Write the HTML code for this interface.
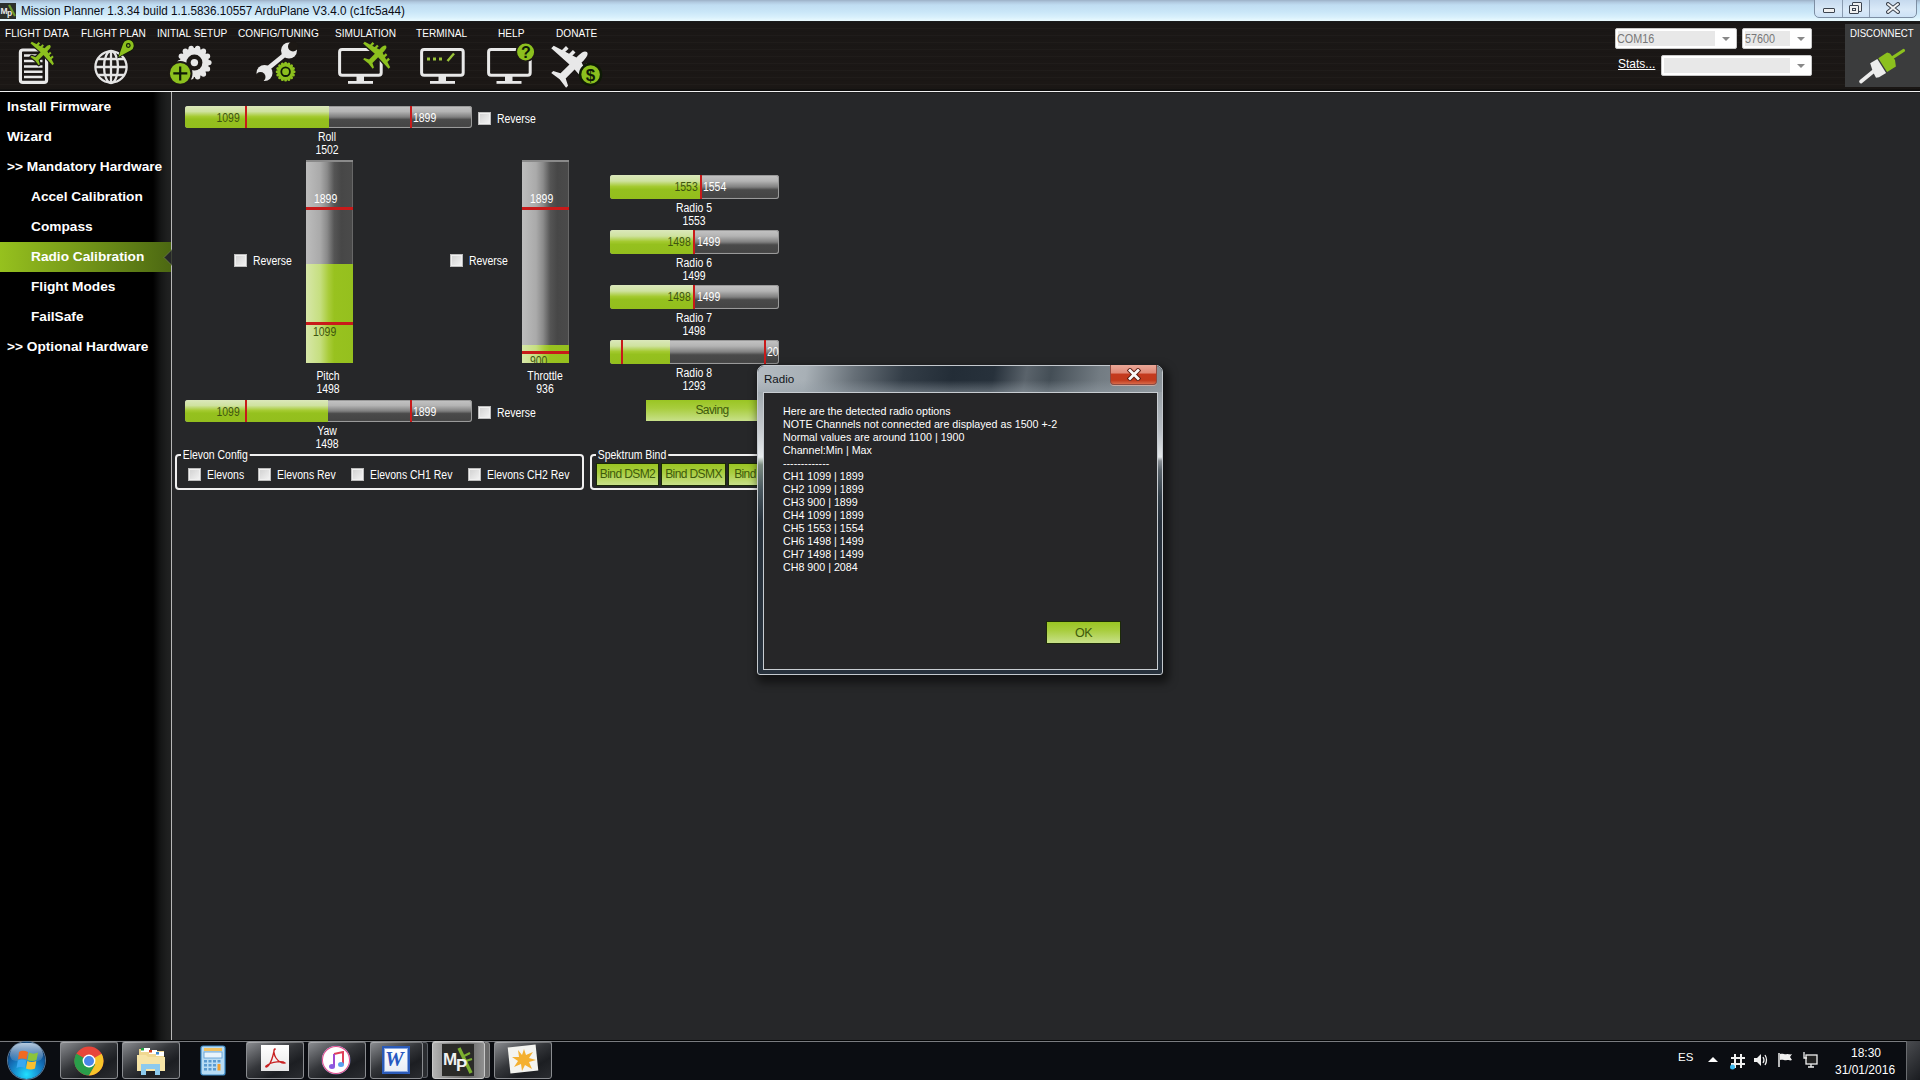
<!DOCTYPE html>
<html><head><meta charset="utf-8">
<style>
*{margin:0;padding:0;box-sizing:border-box}
html,body{width:1920px;height:1080px;overflow:hidden;background:#262729;font-family:"Liberation Sans",sans-serif}
.a{position:absolute}
#title{left:0;top:0;width:1920px;height:21px;background:linear-gradient(#9cb0c6 0,#b0c8de 2px,#c0ddf2 5px,#cae7f8 12px,#d8f0fc 17px,#e6f8fe 20px,#eaf9fe 21px)}
#titletext{left:21px;top:4px;font-size:12.3px;transform:scaleX(.95);transform-origin:0 50%;color:#0c0c14;white-space:nowrap}
#menubar{left:0;top:21px;width:1920px;height:70px;background:linear-gradient(rgba(0,0,0,0) 68px,#0c0c0c 69px),repeating-linear-gradient(rgba(255,240,220,0.025) 0 1px,rgba(0,0,0,0) 1px 3px,rgba(0,0,0,0.05) 3px 4px,rgba(0,0,0,0) 4px 7px),linear-gradient(#121416 0,#1a1716 2px,#1b1715 66px,#191614 68px)}
#hline{left:0;top:91px;width:1920px;height:2px;background:linear-gradient(#f0f0f0 50%,#1c1d1e 50%)}
#sidebar{left:0;top:92px;width:171px;height:948px;background:linear-gradient(90deg,#000 0,#000 153px,#151616 161px,#1e1f1f 167px,#212222 171px)}
#vline{left:171px;top:92px;width:1px;height:948px;background:#b8b8b8}
#taskbar{left:0;top:1040px;width:1920px;height:40px;background:#0b0d12;border-top:1px solid #040506}
.side{position:absolute;left:7px;font-size:13.7px;font-weight:bold;color:#fff;white-space:nowrap}
.side.sub{left:31px}
.mlabel{position:absolute;top:28px;font-size:10.1px;color:#fff;white-space:nowrap}
.combo{position:absolute;height:21px;background:#fff;border:1px solid #c8c8c8;border-radius:2px}
.combo::before{content:"";position:absolute;left:2px;top:2px;right:21px;bottom:2px;background:#e8e8e8}
.combo::after{content:"";position:absolute;right:6px;top:8px;border-left:4px solid transparent;border-right:4px solid transparent;border-top:4px solid #888}
.combo span{position:absolute;top:3px;font-size:12px;color:#777;white-space:nowrap;transform:scaleX(.9);transform-origin:0 50%}

.hbar{position:absolute;height:23px;border-radius:3px;overflow:hidden;background:linear-gradient(#c4c4c4 0,#b4b4b4 25%,#808080 50%,#4a4a4a 62%,#454545 90%,#4e4e4e 100%);box-shadow:inset 0 0 0 1px #9a9a9a}
.hbar .g{position:absolute;left:0;top:0;bottom:0;background:linear-gradient(#dbe8bb 0,#cfe2a0 25%,#a4ca30 48%,#95c11e 60%,#93be1d 100%)}
.vbar{position:absolute;width:47px;height:203px;overflow:hidden;background:linear-gradient(90deg,#bdbdbd 0,#aaa 30%,#8a8a8a 45%,#555 60%,#474747 75%,#4a4a4a 97%,#777 100%);border-top:2px solid #8a8a8a}
.vbar .g{position:absolute;left:0;right:0;bottom:0;background:linear-gradient(90deg,#d7e7a8 0,#c6df80 30%,#a9cc3a 48%,#98c21f 60%,#95c01e 100%)}
.red{position:absolute;background:#c81a1a}
.hbar .red{top:0;bottom:0;width:2px}
.vbar .red{left:0;right:0;height:3px}
.num{position:absolute;margin-top:1px;font-size:12px;white-space:nowrap;line-height:13px;transform:scaleX(.87)}
.nd{color:#3e5510;transform-origin:100% 50%}
.nw{color:#fff;transform-origin:0 50%}
.lbl{position:absolute;margin-top:1px;width:80px;text-align:center;font-size:12px;line-height:13px;color:#fff;white-space:nowrap;transform:scaleX(.87)}
.cb{position:absolute;width:13px;height:13px;background:linear-gradient(135deg,#d0d0d0,#f4f4f4);border:1px solid #bcbcbc;box-shadow:inset 0 0 0 1px #f0f0f0}
.ct{position:absolute;margin-top:1px;font-size:12px;color:#fff;white-space:nowrap;line-height:13px;transform:scaleX(.87);transform-origin:0 50%}
.grp{position:absolute;border:2px solid #f0f0f0;border-radius:4px}
.leg{position:absolute;margin-top:1px;background:#262729;padding:0 2px;font-size:12px;color:#fff;white-space:nowrap;line-height:13px;transform:scaleX(.87);transform-origin:0 50%}
.gbtn{position:absolute;height:23px;background:linear-gradient(#9ac523 0,#a8cd3e 40%,#c8e08a 100%);border:1px solid #1a2a05;font-size:12px;color:#3e5a0c;text-align:center;line-height:21px;white-space:nowrap;letter-spacing:-0.6px}

.tb{position:absolute;top:1041px;height:38px;border:1px solid #8a8c90;border-radius:3px;background:linear-gradient(150deg,#8c8e92 0,#606266 22%,#34363a 45%,#1c1e22 70%,#2a2c30 100%);box-shadow:inset 0 1px 0 rgba(255,255,255,0.3)}
.tbe{position:absolute;top:1042px;height:36px;width:5px;border:1px solid #5a5e64;border-left:none;border-radius:0 3px 3px 0;background:#2a2c30}
.tray{position:absolute;color:#fff;font-size:12px;white-space:nowrap}
</style></head><body>
<div id="title" class="a"></div>
<div id="titletext" class="a">Mission Planner 1.3.34 build 1.1.5836.10557 ArduPlane V3.4.0 (c1fc5a44)</div>
<div id="menubar" class="a"></div>

<div class="mlabel" style="left:5px">FLIGHT DATA</div>
<div class="mlabel" style="left:81px">FLIGHT PLAN</div>
<div class="mlabel" style="left:157px">INITIAL SETUP</div>
<div class="mlabel" style="left:238px">CONFIG/TUNING</div>
<div class="mlabel" style="left:335px">SIMULATION</div>
<div class="mlabel" style="left:416px">TERMINAL</div>
<div class="mlabel" style="left:498px">HELP</div>
<div class="mlabel" style="left:556px">DONATE</div>
<svg class="a" style="left:0;top:21px" width="640" height="70" viewBox="0 21 640 70">
 <defs><clipPath id="dclip"><polygon points="540,20 640,20 640,34 582,92 540,92"/></clipPath></defs>
 <!-- flight data doc -->
 <rect x="20.4" y="50" width="26.2" height="32.4" rx="2.5" fill="none" stroke="#e8e8e8" stroke-width="3.2"/>
 <g stroke="#e8e8e8" stroke-width="2.5"><path d="M24,55.6h18.5M24,60.9h18.5M24,66.5h18.5M24,71.8h18.5M24,77h18.5"/></g>
 <path d="M0,-12 C1.8,-12 2.6,-9.5 2.6,-6 L2.6,-4 L20,1.5 L20,4 L2.6,3 L2.6,12 L7.5,14.5 L7.5,16.5 L0,15.5 L-7.5,16.5 L-7.5,14.5 L-2.6,12 L-2.6,3 L-20,4 L-20,1.5 L-2.6,-4 L-2.6,-6 C-2.6,-9.5 -1.8,-12 0,-12Z M5.5,-6 h2.6 v4 h-2.6Z M11,-4.5 h2.6 v4 h-2.6Z M-8.1,-6 h2.6 v4 h-2.6Z M-13.6,-4.5 h2.6 v4 h-2.6Z" transform="translate(43.7,52) rotate(45) scale(0.78)" fill="#8cc01e" stroke="#1c1917" stroke-width="3" paint-order="stroke" stroke-linejoin="round"/>
 <!-- globe -->
 <g fill="none" stroke="#e4e4e4" stroke-width="2.3">
  <circle cx="111" cy="67" r="15.6"/>
  <ellipse cx="111" cy="67" rx="7" ry="16"/>
  <path d="M111,51v32M95,67h32M97.5,59h27M97.5,75h27"/>
 </g>
 <path d="M118.5,57 L123.1,43.7 A5.5,5.5 0 1 1 130.9,50.35 Z" fill="#8cc01e" stroke="#0e1a06" stroke-width="1.4" paint-order="stroke"/>
 <circle cx="128.3" cy="45.5" r="1.8" fill="none" stroke="#0e1a06" stroke-width="1.2"/>
 <!-- initial setup gear -->
 <circle cx="194.4" cy="62.6" r="14.5" fill="#e8e8e8"/><circle cx="208.90" cy="62.60" r="2.7" fill="#e8e8e8"/><circle cx="207.46" cy="68.89" r="2.7" fill="#e8e8e8"/><circle cx="203.44" cy="73.94" r="2.7" fill="#e8e8e8"/><circle cx="197.63" cy="76.74" r="2.7" fill="#e8e8e8"/><circle cx="191.17" cy="76.74" r="2.7" fill="#e8e8e8"/><circle cx="185.36" cy="73.94" r="2.7" fill="#e8e8e8"/><circle cx="181.34" cy="68.89" r="2.7" fill="#e8e8e8"/><circle cx="179.90" cy="62.60" r="2.7" fill="#e8e8e8"/><circle cx="181.34" cy="56.31" r="2.7" fill="#e8e8e8"/><circle cx="185.36" cy="51.26" r="2.7" fill="#e8e8e8"/><circle cx="191.17" cy="48.46" r="2.7" fill="#e8e8e8"/><circle cx="197.63" cy="48.46" r="2.7" fill="#e8e8e8"/><circle cx="203.44" cy="51.26" r="2.7" fill="#e8e8e8"/><circle cx="207.46" cy="56.31" r="2.7" fill="#e8e8e8"/>
 <circle cx="194.4" cy="62.6" r="8" fill="#1c1815"/>
 <circle cx="194.4" cy="62.6" r="3.7" fill="#e8e8e8"/>
 <circle cx="180.2" cy="73.4" r="11.3" fill="#8cc01e" stroke="#1c1815" stroke-width="2"/>
 <path d="M180.2,66.5v14M173.3,73.4h14" stroke="#0e1a06" stroke-width="2.2"/>
 <!-- config tuning wrench -->
 <path d="M266,70 L288,52" stroke="#e8e8e8" stroke-width="4.6" stroke-linecap="round"/>
 <circle cx="289" cy="50.5" r="8" fill="#e8e8e8"/><circle cx="293" cy="46.5" r="5" fill="#1c1815"/>
 <circle cx="264.5" cy="73" r="8" fill="#e8e8e8"/><circle cx="260.5" cy="77" r="5" fill="#1c1815"/>
 <circle cx="285.6" cy="71.7" r="9.2" fill="#1c1815"/><circle cx="294.80" cy="71.70" r="1.6" fill="#1c1815"/><circle cx="294.10" cy="75.22" r="1.6" fill="#1c1815"/><circle cx="292.11" cy="78.21" r="1.6" fill="#1c1815"/><circle cx="289.12" cy="80.20" r="1.6" fill="#1c1815"/><circle cx="285.60" cy="80.90" r="1.6" fill="#1c1815"/><circle cx="282.08" cy="80.20" r="1.6" fill="#1c1815"/><circle cx="279.09" cy="78.21" r="1.6" fill="#1c1815"/><circle cx="277.10" cy="75.22" r="1.6" fill="#1c1815"/><circle cx="276.40" cy="71.70" r="1.6" fill="#1c1815"/><circle cx="277.10" cy="68.18" r="1.6" fill="#1c1815"/><circle cx="279.09" cy="65.19" r="1.6" fill="#1c1815"/><circle cx="282.08" cy="63.20" r="1.6" fill="#1c1815"/><circle cx="285.60" cy="62.50" r="1.6" fill="#1c1815"/><circle cx="289.12" cy="63.20" r="1.6" fill="#1c1815"/><circle cx="292.11" cy="65.19" r="1.6" fill="#1c1815"/><circle cx="294.10" cy="68.18" r="1.6" fill="#1c1815"/>
 <circle cx="285.6" cy="71.7" r="8.4" fill="#8cc01e"/><circle cx="294.00" cy="71.70" r="1.5" fill="#8cc01e"/><circle cx="293.36" cy="74.91" r="1.5" fill="#8cc01e"/><circle cx="291.54" cy="77.64" r="1.5" fill="#8cc01e"/><circle cx="288.81" cy="79.46" r="1.5" fill="#8cc01e"/><circle cx="285.60" cy="80.10" r="1.5" fill="#8cc01e"/><circle cx="282.39" cy="79.46" r="1.5" fill="#8cc01e"/><circle cx="279.66" cy="77.64" r="1.5" fill="#8cc01e"/><circle cx="277.84" cy="74.91" r="1.5" fill="#8cc01e"/><circle cx="277.20" cy="71.70" r="1.5" fill="#8cc01e"/><circle cx="277.84" cy="68.49" r="1.5" fill="#8cc01e"/><circle cx="279.66" cy="65.76" r="1.5" fill="#8cc01e"/><circle cx="282.39" cy="63.94" r="1.5" fill="#8cc01e"/><circle cx="285.60" cy="63.30" r="1.5" fill="#8cc01e"/><circle cx="288.81" cy="63.94" r="1.5" fill="#8cc01e"/><circle cx="291.54" cy="65.76" r="1.5" fill="#8cc01e"/><circle cx="293.36" cy="68.49" r="1.5" fill="#8cc01e"/>
 <circle cx="285.6" cy="71.7" r="4.3" fill="none" stroke="#0e1a06" stroke-width="1.8"/>
 <!-- monitors -->
 <g fill="none" stroke="#e8e8e8">
  <rect x="339.6" y="49.5" width="41.6" height="25.8" rx="2.5" stroke-width="3"/>
  <rect x="421.6" y="49.5" width="41.6" height="25.8" rx="2.5" stroke-width="3"/>
  <rect x="488.6" y="49.5" width="41.6" height="25.8" rx="2.5" stroke-width="3"/>
 </g>
 <g fill="#e8e8e8">
  <rect x="356.5" y="76" width="7.5" height="5.5"/><rect x="348" y="81" width="25" height="2.8"/>
  <rect x="438.5" y="76" width="7.5" height="5.5"/><rect x="430" y="81" width="25" height="2.8"/>
  <rect x="505" y="76" width="7.5" height="5.5"/><rect x="496.5" y="81" width="25" height="2.8"/>
 </g>
 <path d="M0,-12 C1.8,-12 2.6,-9.5 2.6,-6 L2.6,-4 L20,1.5 L20,4 L2.6,3 L2.6,12 L7.5,14.5 L7.5,16.5 L0,15.5 L-7.5,16.5 L-7.5,14.5 L-2.6,12 L-2.6,3 L-20,4 L-20,1.5 L-2.6,-4 L-2.6,-6 C-2.6,-9.5 -1.8,-12 0,-12Z M5.5,-6 h2.6 v4 h-2.6Z M11,-4.5 h2.6 v4 h-2.6Z M-8.1,-6 h2.6 v4 h-2.6Z M-13.6,-4.5 h2.6 v4 h-2.6Z" transform="translate(378.4,53.6) rotate(45) scale(0.9)" fill="#8cc01e" stroke="#1c1917" stroke-width="3" paint-order="stroke" stroke-linejoin="round"/>
 <!-- terminal dots -->
 <g fill="#9bc43a"><rect x="427" y="57.5" width="3" height="3"/><rect x="433" y="57.5" width="3" height="3"/><rect x="439" y="57.5" width="3" height="3"/></g>
 <path d="M447.5,61 L454,53.5" stroke="#9bc43a" stroke-width="2.4"/>
 <!-- help -->
 <circle cx="525.6" cy="52" r="9.3" fill="#8cc01e" stroke="#1c1815" stroke-width="1.6"/>
 <text x="525.8" y="58" font-family="Liberation Sans" font-weight="bold" font-size="16" text-anchor="middle" fill="#0e1a06">?</text>
 <!-- donate plane -->
 <g clip-path="url(#dclip)"><path d="M0,-12 C1.8,-12 2.6,-9.5 2.6,-6 L2.6,-4 L20,1.5 L20,4 L2.6,3 L2.6,12 L7.5,14.5 L7.5,16.5 L0,15.5 L-7.5,16.5 L-7.5,14.5 L-2.6,12 L-2.6,3 L-20,4 L-20,1.5 L-2.6,-4 L-2.6,-6 C-2.6,-9.5 -1.8,-12 0,-12Z M5.5,-6 h2.6 v4 h-2.6Z M11,-4.5 h2.6 v4 h-2.6Z M-8.1,-6 h2.6 v4 h-2.6Z M-13.6,-4.5 h2.6 v4 h-2.6Z" transform="translate(575,64) rotate(45) scale(1.4)" fill="#e8e8e8"/></g>
 <circle cx="590.6" cy="74.5" r="10.5" fill="#8cc01e" stroke="#0e1a06" stroke-width="2.4"/>
 <text x="590.6" y="80.8" font-family="Liberation Sans" font-weight="bold" font-size="17" text-anchor="middle" fill="#0e1a06">$</text>
</svg>

<!-- title icon -->
<div class="a" style="left:0;top:3px;width:16px;height:16px;background:#2c302c"></div>
<svg class="a" style="left:0;top:3px" width="16" height="16" viewBox="0 0 16 16">
 <path d="M9,2 L15,13" stroke="#6a9a2a" stroke-width="2.2"/>
 <text x="0.5" y="10.5" font-family="Liberation Sans" font-weight="bold" font-size="8.5" fill="#e8e8e8" letter-spacing="-0.8">M</text>
 <text x="7" y="13" font-family="Liberation Sans" font-weight="bold" font-size="8.5" fill="#e8e8e8">p</text>
</svg>
<!-- window controls -->
<div class="a" style="left:1814px;top:-3px;width:103px;height:21px;border:1px solid #7d8ea3;border-radius:0 0 5px 5px;background:linear-gradient(#c2d6ec,#d9e9f8 60%,#cde2f6)"></div>
<div class="a" style="left:1842px;top:0;width:1px;height:17px;background:#8a9bb0"></div>
<div class="a" style="left:1869px;top:0;width:1px;height:17px;background:#8a9bb0"></div>
<div class="a" style="left:1823px;top:8px;width:12px;height:5px;border:1px solid #3c4450;border-radius:1px;background:#f0f0f0"></div>
<div class="a" style="left:1852px;top:2px;width:10px;height:10px;border:1px solid #3c4450;border-radius:1px;background:#f0f0f0"></div>
<div class="a" style="left:1849px;top:5px;width:10px;height:9px;border:1px solid #3c4450;border-radius:1px;background:#f0f0f0"></div>
<div class="a" style="left:1852px;top:8px;width:4px;height:3px;border:1px solid #3c4450"></div>
<svg class="a" style="left:1886px;top:2px" width="14" height="12"><path d="M2,2 L12,10 M12,2 L2,10" stroke="#3c4450" stroke-width="4" stroke-linecap="round"/><path d="M2,2 L12,10 M12,2 L2,10" stroke="#f4f4f4" stroke-width="2" stroke-linecap="round"/></svg>
<!-- combos -->
<div class="combo" style="left:1615px;top:28px;width:122px"><span style="left:1px">COM16</span></div>
<div class="combo" style="left:1742px;top:28px;width:70px"><span style="left:2px">57600</span></div>
<div class="combo" style="left:1661px;top:55px;width:151px"></div>
<div class="a" style="left:1618px;top:57px;font-size:12px;color:#fff;text-decoration:underline;white-space:nowrap">Stats...</div>
<!-- disconnect -->
<div class="a" style="left:1845px;top:24px;width:75px;height:63px;background:#3b3c3d"></div>
<div class="a" style="left:1850px;top:27px;font-size:11px;color:#fff;white-space:nowrap;transform:scaleX(.875);transform-origin:0 50%">DISCONNECT</div>
<svg class="a" style="left:1845px;top:23px" width="75" height="64" viewBox="1845 23 75 64">
 <path d="M1892,58 L1903.5,50.5" stroke="#8cc01e" stroke-width="3.2" stroke-linecap="round"/>
 <path d="M1878.3,58.2 L1884,54.6 L1887.1,52.6 L1890,53.5 L1895,60 L1895.9,66.5 L1887.1,72.1Z" fill="#8cc01e"/>
 <path d="M1874.5,70.5 L1861,81.5" stroke="#ececec" stroke-width="3.6" stroke-linecap="round"/>
 <path d="M1877.3,59 L1886.1,73 L1879,77.2 L1876,77.8 L1873,72 L1870.2,63.3Z" fill="#ececec"/>
</svg>
<div id="hline" class="a"></div>
<div id="sidebar" class="a"></div>
<div id="vline" class="a"></div>
<div class="a" style="left:0;top:242px;width:171px;height:30px;background:linear-gradient(90deg,#96c11e,#7a9e1a 40%,#4c6812 100%)"></div>
<svg class="a" style="left:163px;top:249px" width="9" height="17"><path d="M9,0.5 L1,8.5 L9,16.5Z" fill="#262729" stroke="#7a8a5a" stroke-width="0.6"/></svg>
<div class="side" style="top:99px">Install Firmware</div>
<div class="side" style="top:129px">Wizard</div>
<div class="side" style="top:159px">&gt;&gt; Mandatory Hardware</div>
<div class="side sub" style="top:189px">Accel Calibration</div>
<div class="side sub" style="top:219px">Compass</div>
<div class="side sub" style="top:249px">Radio Calibration</div>
<div class="side sub" style="top:279px">Flight Modes</div>
<div class="side sub" style="top:309px">FailSafe</div>
<div class="side" style="top:339px">&gt;&gt; Optional Hardware</div>

<!-- ROLL -->
<div class="hbar" style="left:185px;top:106px;width:287px;height:22px"><div class="g" style="width:144px"></div><div class="red" style="left:60px"></div><div class="red" style="left:225px"></div>
 <div class="num nd" style="right:232px;top:5px">1099</div><div class="num nw" style="left:228px;top:5px">1899</div></div>
<div class="cb" style="left:478px;top:112px"></div><div class="ct" style="left:497px;top:112px">Reverse</div>
<div class="lbl" style="left:287px;top:130px">Roll<br>1502</div>
<!-- PITCH -->
<div class="vbar" style="left:306px;top:160px"><div class="g" style="height:99px"></div><div class="red" style="top:45px"></div><div class="red" style="top:160px"></div>
 <div class="num nw" style="left:8px;top:30px">1899</div><div class="num nd" style="left:7px;top:163px;transform-origin:0 50%">1099</div></div>
<div class="cb" style="left:234px;top:254px"></div><div class="ct" style="left:253px;top:254px">Reverse</div>
<div class="lbl" style="left:288px;top:369px">Pitch<br>1498</div>
<!-- THROTTLE -->
<div class="vbar" style="left:522px;top:160px"><div class="g" style="height:18px"></div><div class="red" style="top:45px"></div><div class="red" style="top:189px"></div>
 <div class="num nw" style="left:8px;top:30px">1899</div><div class="num nd" style="left:8px;top:192px;transform-origin:0 50%">900</div></div>
<div class="cb" style="left:450px;top:254px"></div><div class="ct" style="left:469px;top:254px">Reverse</div>
<div class="lbl" style="left:505px;top:369px">Throttle<br>936</div>
<!-- YAW -->
<div class="hbar" style="left:185px;top:400px;width:287px;height:22px"><div class="g" style="width:143px"></div><div class="red" style="left:60px"></div><div class="red" style="left:225px"></div>
 <div class="num nd" style="right:232px;top:5px">1099</div><div class="num nw" style="left:228px;top:5px">1899</div></div>
<div class="cb" style="left:478px;top:406px"></div><div class="ct" style="left:497px;top:406px">Reverse</div>
<div class="lbl" style="left:287px;top:424px">Yaw<br>1498</div>
<!-- RADIO 5-8 -->
<div class="hbar" style="left:610px;top:175px;width:169px;height:24px"><div class="g" style="width:90px"></div><div class="red" style="left:90px"></div>
 <div class="num nd" style="right:81px;top:5px">1553</div><div class="num nw" style="left:93px;top:5px">1554</div></div>
<div class="lbl" style="left:654px;top:201px">Radio 5<br>1553</div>
<div class="hbar" style="left:610px;top:230px;width:169px;height:24px"><div class="g" style="width:83px"></div><div class="red" style="left:83px"></div>
 <div class="num nd" style="right:88px;top:5px">1498</div><div class="num nw" style="left:87px;top:5px">1499</div></div>
<div class="lbl" style="left:654px;top:256px">Radio 6<br>1499</div>
<div class="hbar" style="left:610px;top:285px;width:169px;height:24px"><div class="g" style="width:83px"></div><div class="red" style="left:83px"></div>
 <div class="num nd" style="right:88px;top:5px">1498</div><div class="num nw" style="left:87px;top:5px">1499</div></div>
<div class="lbl" style="left:654px;top:311px">Radio 7<br>1498</div>
<div class="hbar" style="left:610px;top:340px;width:169px;height:24px"><div class="g" style="width:60px"></div><div class="red" style="left:11px"></div><div class="red" style="left:154px"></div>
 <div class="num nw" style="left:157px;top:5px">20</div></div>
<div class="lbl" style="left:654px;top:366px">Radio 8<br>1293</div>
<div class="gbtn" style="left:645px;top:399px;width:134px;border-color:#262628">Saving</div>
<!-- ELEVON -->
<div class="grp" style="left:175px;top:454px;width:409px;height:36px"></div>
<div class="leg" style="left:181px;top:448px">Elevon Config</div>
<div class="cb" style="left:188px;top:468px"></div><div class="ct" style="left:207px;top:468px">Elevons</div>
<div class="cb" style="left:258px;top:468px"></div><div class="ct" style="left:277px;top:468px">Elevons Rev</div>
<div class="cb" style="left:351px;top:468px"></div><div class="ct" style="left:370px;top:468px">Elevons CH1 Rev</div>
<div class="cb" style="left:468px;top:468px"></div><div class="ct" style="left:487px;top:468px">Elevons CH2 Rev</div>
<!-- SPEKTRUM -->
<div class="grp" style="left:590px;top:454px;width:220px;height:36px"></div>
<div class="leg" style="left:596px;top:448px">Spektrum Bind</div>
<div class="gbtn" style="left:596px;top:463px;width:63px">Bind DSM2</div>
<div class="gbtn" style="left:661px;top:463px;width:65px">Bind DSMX</div>
<div class="gbtn" style="left:728px;top:463px;width:75px">Bind DSMX8</div>

<!-- DIALOG -->
<div class="a" style="left:757px;top:365px;width:406px;height:310px;border:1px solid #c4c9ce;border-radius:7px 7px 3px 3px;background:#27313c;box-shadow:3px 5px 9px 3px rgba(0,0,0,0.5)"></div>
<div class="a" style="left:758px;top:366px;width:404px;height:26px;border-radius:6px 6px 0 0;background:linear-gradient(rgba(150,160,168,0) 55%,rgba(150,160,168,0.5) 100%),linear-gradient(100deg,#b4bbc1 0,#a8b0b6 12%,#666f77 24%,#333d47 36%,#232d37 48%,#27313b 58%,#5a636b 66%,#444e56 72%,#737c83 84%,#8a9298 100%)"></div>
<div class="a" style="left:758px;top:392px;width:5px;height:130px;background:linear-gradient(#a0a8ae 0,#c8ccd0 30%,#e8ecee 50%,#b0beb4 53%,#7a8a80 56%,#4a5860 75%,#27313c 100%)"></div>
<div class="a" style="left:1157px;top:392px;width:5px;height:130px;background:linear-gradient(#98a0a6 0,#b8bec4 30%,#e4e8ea 50%,#8a9096 53%,#5a646c 60%,#34404a 80%,#27313c 100%)"></div>
<div class="a" style="left:763px;top:392px;width:395px;height:278px;border:1px solid #c8cdd2;background:#262628"></div>
<div class="a" style="left:764px;top:372px;font-size:11.6px;color:#101418;white-space:nowrap">Radio</div>
<div class="a" style="left:1110px;top:365px;width:47px;height:20px;border:1px solid #8e4a40;border-top:none;border-radius:0 0 4px 4px;background:linear-gradient(#eaa898 0,#e08a78 40%,#c43a1e 50%,#c23a1c 80%,#d86a4a 100%);box-shadow:0 1px 0 #c8a8a0"></div>
<svg class="a" style="left:1127px;top:368px" width="14" height="13"><path d="M3,2.5 L11,10.5 M11,2.5 L3,10.5" stroke="#5a1a10" stroke-width="4.6" stroke-linecap="square"/><path d="M3,2.5 L11,10.5 M11,2.5 L3,10.5" stroke="#f8f8f8" stroke-width="2.8" stroke-linecap="square"/></svg>
<div class="a" style="left:783px;top:405px;font-size:10.7px;line-height:13px;color:#fff;white-space:pre">Here are the detected radio options
NOTE Channels not connected are displayed as 1500 +-2
Normal values are around 1100 | 1900
Channel:Min | Max
-------------
CH1 1099 | 1899
CH2 1099 | 1899
CH3 900 | 1899
CH4 1099 | 1899
CH5 1553 | 1554
CH6 1498 | 1499
CH7 1498 | 1499
CH8 900 | 2084</div>
<div class="gbtn" style="left:1046px;top:621px;width:75px;height:23px;line-height:23px;font-size:12.5px;border-color:#1c2a08">OK</div>
<div id="taskbar" class="a"></div>

<div class="a" style="left:0;top:1041px;width:1920px;height:1px;background:#7a7c80"></div>
<!-- start orb -->
<div class="a" style="left:8px;top:1042px;width:37px;height:37px;border-radius:50%;background:radial-gradient(circle at 50% 88%,#20e0ff 0,#1aa8e0 22%,#1470b8 48%,#0e4a8a 70%,#164a7a 100%);box-shadow:0 0 0 1px #5a7a9a"></div>
<div class="a" style="left:10px;top:1043px;width:33px;height:18px;border-radius:17px 17px 8px 8px;background:linear-gradient(rgba(235,245,255,0.75),rgba(200,220,240,0.35) 70%,rgba(255,255,255,0.1))"></div>
<svg class="a" style="left:14px;top:1048px" width="26" height="25" viewBox="0 0 26 25">
 <path d="M5,4 C8,2 11,3 14,4 L12.5,11.5 C10,10.5 7,10 4,11.5Z" fill="#f06a22"/>
 <path d="M15,4.5 C18,6 21,6 24,4.5 L22.5,12 C19.5,13.5 16.5,13 13.5,12Z" fill="#8cc43a"/>
 <path d="M3.8,12.5 C7,11 10,11.5 12.3,12.5 L11,20 C8,18.5 5,18.5 2.5,20Z" fill="#3aa8f0"/>
 <path d="M13.3,13 C16.5,14.5 19.5,14 22.3,13 L21,20.5 C18,22 15,21.5 12,20.5Z" fill="#f8c030"/>
</svg>
<!-- chrome -->
<div class="tb" style="left:60px;width:58px"></div>
<svg class="a" style="left:73px;top:1045px" width="32" height="32" viewBox="0 0 32 32">
 <circle cx="16" cy="16" r="14.5" fill="#e8463a"/>
 <path d="M16,16 L3.4,23.2 A14.5,14.5 0 0 1 3.4,8.8 L9.7,12.4 Z" fill="#2a9e4a"/>
 <path d="M16,16 L9.7,12.4 L3.4,8.8 A14.5,14.5 0 0 0 16,30.5 L22.3,19.6Z" fill="#2a9e4a"/>
 <path d="M16,16 L28.6,8.8 A14.5,14.5 0 0 1 16,30.5 L22.3,19.6Z" fill="#f8c52a"/>
 <circle cx="16" cy="16" r="6.4" fill="#fff"/>
 <circle cx="16" cy="16" r="5" fill="#4a86e8"/>
</svg>
<!-- explorer -->
<div class="tb" style="left:122px;width:58px"></div>
<svg class="a" style="left:134px;top:1046px" width="34" height="30" viewBox="0 0 34 30">
 <path d="M5,3 h8 l1,2 h16 v20 h-25Z" fill="#f0d890"/>
 <rect x="7" y="2" width="9" height="4" fill="#fff"/><rect x="7" y="2" width="3" height="2.5" fill="#20a040"/>
 <rect x="15" y="4" width="8" height="4" fill="#fff"/><rect x="15" y="4" width="3" height="2.5" fill="#d04020"/>
 <rect x="22" y="6" width="8" height="4" fill="#fff"/><rect x="22" y="6" width="3" height="2.5" fill="#3a8ad0"/>
 <path d="M3,9 h9 l2,2 h17 v14 h-28Z" fill="#f6e4a6"/>
 <path d="M7,18 h19 v11 h-5 v-6 h-9 v6 h-5Z" fill="#8ccaee"/>
</svg>
<!-- calculator -->
<svg class="a" style="left:200px;top:1045px" width="26" height="31" viewBox="0 0 26 31">
 <rect x="1" y="1" width="24" height="29" rx="2" fill="#b8dcf4" stroke="#3a8ac8" stroke-width="1.2"/>
 <rect x="4" y="3" width="18" height="3" fill="#f0c060"/>
 <rect x="4" y="7" width="18" height="6" fill="#e8f4fc" stroke="#5a9ad0" stroke-width="0.8"/>
 <g fill="#5a9ad0"><rect x="4" y="15" width="3" height="2.5"/><rect x="8.5" y="15" width="3" height="2.5"/><rect x="13" y="15" width="3" height="2.5"/><rect x="17.5" y="15" width="3" height="2.5"/>
 <rect x="4" y="19" width="3" height="2.5"/><rect x="8.5" y="19" width="3" height="2.5"/><rect x="13" y="19" width="3" height="2.5"/>
 <rect x="4" y="23" width="3" height="2.5"/><rect x="8.5" y="23" width="3" height="2.5"/><rect x="13" y="23" width="3" height="2.5"/></g>
 <rect x="17.5" y="19" width="3" height="6.5" fill="#f0a030"/>
</svg>
<!-- acrobat -->
<div class="tb" style="left:246px;width:58px"></div>
<div class="a" style="left:261px;top:1045px;width:28px;height:26px;background:linear-gradient(#fff,#e8e8e8)"></div>
<svg class="a" style="left:263px;top:1047px" width="24" height="22" viewBox="0 0 24 22"><path d="M12,2 C10,2 11,8 13,11 C15,14 19,17 22,16 C20,14 9,14 3,19 C2,20 4,21 6,18 C8,15 10,9 11,4 C11,2 13,2 12,2Z" fill="none" stroke="#c82020" stroke-width="1.3"/></svg>
<!-- itunes -->
<div class="tb" style="left:308px;width:58px"></div>
<div class="a" style="left:322px;top:1046px;width:28px;height:28px;border-radius:50%;background:#fff;box-shadow:inset 0 0 0 1px #e04a8a,0 0 0 0.5px #6a6aa0"></div>
<svg class="a" style="left:328px;top:1051px" width="18" height="19" viewBox="0 0 18 19"><path d="M6,3 L15,1 V13" stroke="#e0405a" stroke-width="2" fill="none"/><path d="M6,3 V15" stroke="#a04ad0" stroke-width="2"/><ellipse cx="4" cy="15.5" rx="3" ry="2.5" fill="#8a5ae0"/><ellipse cx="13" cy="13.5" rx="3" ry="2.5" fill="#5aa0f0"/></svg>
<!-- word -->
<div class="tb" style="left:370px;width:53px"></div><div class="tbe" style="left:423px"></div>
<div class="a" style="left:382px;top:1046px;width:28px;height:28px;background:linear-gradient(#fff,#e8ecf4);border:2px solid #2a5ab8;box-shadow:inset 0 0 0 1px #8aa8e0"></div>
<div class="a" style="left:385px;top:1047px;font-size:21px;font-weight:bold;font-style:italic;color:#2858c0;letter-spacing:-2px;font-family:'Liberation Serif',serif">W</div>
<!-- MP -->
<div class="tb" style="left:432px;width:53px;background:linear-gradient(90deg,#b4b4b4 0,#8a8a8a 30%,#6a6a6a 70%,#909090 100%);border-color:#c8c8c8"></div><div class="tbe" style="left:485px;background:#6a6a6a;border-color:#8a8a8a"></div>
<div class="a" style="left:442px;top:1044px;width:32px;height:32px;background:#2a2a28"></div>
<svg class="a" style="left:442px;top:1044px" width="32" height="32" viewBox="0 0 32 32">
 <path d="M17,4 L29,29" stroke="#7cb030" stroke-width="3.4"/><path d="M22,12 L28,9 M24,17 L30,15" stroke="#7cb030" stroke-width="2.2"/>
 <text x="1" y="21" font-family="Liberation Sans" font-weight="bold" font-size="17" fill="#f0f0f0" letter-spacing="-1">M</text>
 <text x="14" y="27" font-family="Liberation Sans" font-weight="bold" font-size="17" fill="#f0f0f0">P</text>
</svg>
<!-- picasa -->
<div class="tb" style="left:494px;width:58px"></div>
<div class="a" style="left:509px;top:1046px;width:28px;height:26px;background:#f4f4f0;transform:rotate(-6deg)"></div>
<svg class="a" style="left:510px;top:1047px" width="28" height="26" viewBox="0 0 28 26"><path d="M14,2 L16,8 L23,5 L19,11 L26,13 L19,15 L22,22 L15,18 L12,24 L11,17 L4,20 L8,14 L2,10 L9,10 L8,3 L12,8Z" fill="#f4b030"/></svg>
<!-- tray -->
<div class="tray" style="left:1678px;top:1051px;font-size:11.5px">ES</div>
<svg class="a" style="left:1708px;top:1056px" width="10" height="6"><path d="M0,6 L5,1 L10,6Z" fill="#fff"/></svg>
<svg class="a" style="left:1729px;top:1052px" width="18" height="18" viewBox="0 0 18 18"><g stroke="#f0f0f0" stroke-width="2"><path d="M6,2 V16 M12,2 V16 M2,6 H16 M2,12 H16"/></g><circle cx="3.5" cy="15" r="2.5" fill="#3ab8f0"/></svg>
<svg class="a" style="left:1753px;top:1052px" width="16" height="16" viewBox="0 0 16 16"><path d="M1,6 H4 L8,2 V14 L4,10 H1Z" fill="#f0f0f0"/><path d="M10,5 Q12,8 10,11 M12,3 Q15,8 12,13" stroke="#f0f0f0" stroke-width="1.3" fill="none"/></svg>
<svg class="a" style="left:1777px;top:1052px" width="16" height="16" viewBox="0 0 16 16"><path d="M2,1 V15" stroke="#f0f0f0" stroke-width="1.5"/><path d="M3,2 C6,1 8,3 10,2 C12,2 13,3 15,2 L13,5 L15,8 C13,9 12,8 10,8 C8,9 6,7 3,8Z" fill="#f0f0f0"/></svg>
<svg class="a" style="left:1802px;top:1052px" width="16" height="16" viewBox="0 0 16 16"><rect x="4" y="3" width="11" height="9" fill="#222" stroke="#f0f0f0" stroke-width="1.3"/><path d="M2,0 V6 H5 M9,12 V15 M6,15 H12" stroke="#f0f0f0" stroke-width="1.3" fill="none"/></svg>
<div class="tray" style="left:1851px;top:1046px">18:30</div>
<div class="tray" style="left:1835px;top:1063px">31/01/2016</div>
<div class="a" style="left:1906px;top:1041px;width:14px;height:39px;border-left:1px solid #6a6c70;background:linear-gradient(135deg,#4a4c50,#1a1c20)"></div>
</body></html>
